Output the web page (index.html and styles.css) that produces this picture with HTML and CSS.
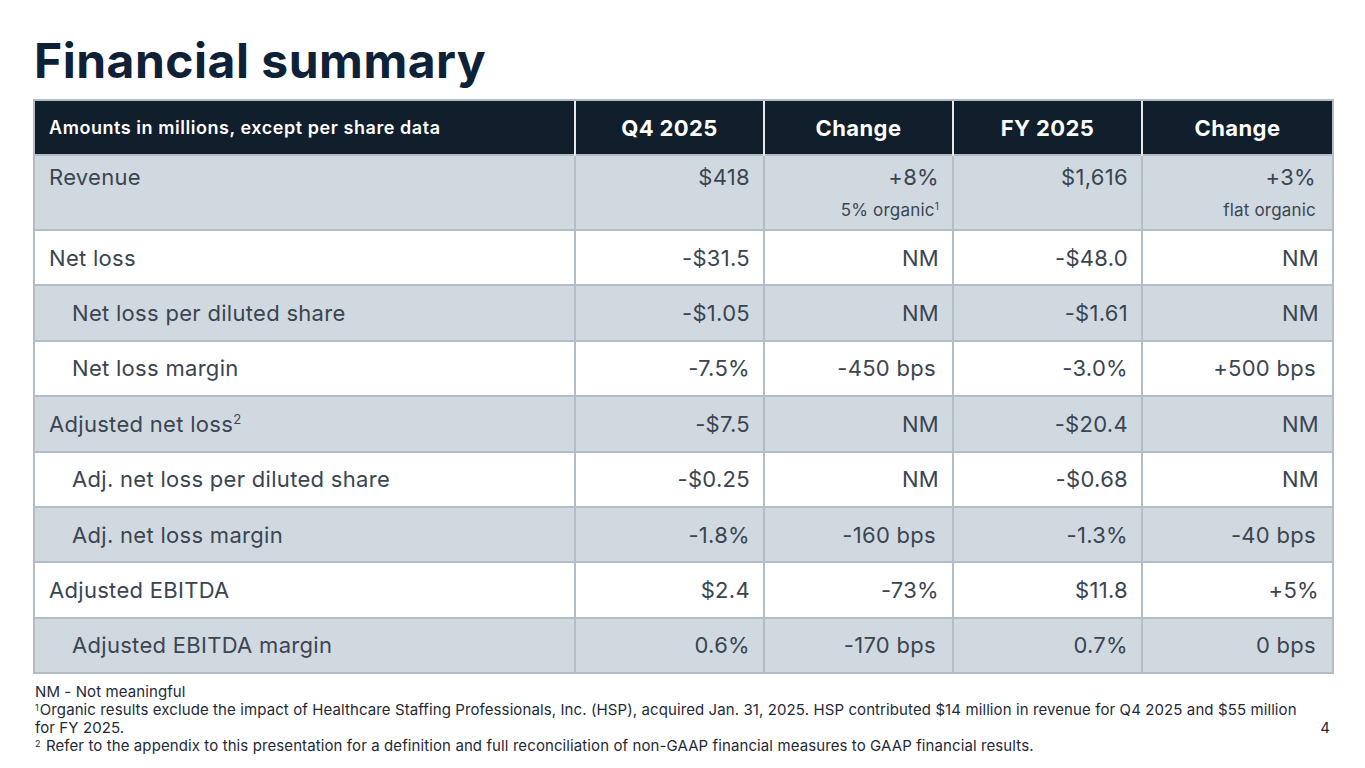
FILE: index.html
```html
<!DOCTYPE html>
<html>
<head>
<meta charset="utf-8">
<link rel="stylesheet" href="styles.css">
</head>
<body>
<div class="slide">
  <h1 class="title">Financial summary</h1>
  <table class="fin">
    <colgroup>
      <col class="c-label"><col class="c-num"><col class="c-num"><col class="c-num"><col class="c-last">
    </colgroup>
    <thead>
      <tr>
        <th class="h-label">Amounts in millions, except per share data</th>
        <th>Q4 2025</th>
        <th>Change</th>
        <th>FY 2025</th>
        <th>Change</th>
      </tr>
    </thead>
    <tbody>
      <tr class="shade rev">
        <td class="label">Revenue</td>
        <td>$418</td>
        <td>+8%<span class="sub">5% organic<sup>1</sup></span></td>
        <td>$1,616</td>
        <td class="bps">+3%<span class="sub">flat organic</span></td>
      </tr>
      <tr>
        <td class="label">Net loss</td>
        <td>-$31.5</td><td>NM</td><td>-$48.0</td><td>NM</td>
      </tr>
      <tr class="shade">
        <td class="label ind">Net loss per diluted share</td>
        <td>-$1.05</td><td>NM</td><td>-$1.61</td><td>NM</td>
      </tr>
      <tr>
        <td class="label ind">Net loss margin</td>
        <td>-7.5%</td><td class="bps">-450 bps</td><td>-3.0%</td><td class="bps">+500 bps</td>
      </tr>
      <tr class="shade">
        <td class="label">Adjusted net loss<sup>2</sup></td>
        <td>-$7.5</td><td>NM</td><td>-$20.4</td><td>NM</td>
      </tr>
      <tr>
        <td class="label ind">Adj. net loss per diluted share</td>
        <td>-$0.25</td><td>NM</td><td>-$0.68</td><td>NM</td>
      </tr>
      <tr class="shade">
        <td class="label ind">Adj. net loss margin</td>
        <td>-1.8%</td><td class="bps">-160 bps</td><td>-1.3%</td><td class="bps">-40 bps</td>
      </tr>
      <tr>
        <td class="label">Adjusted EBITDA</td>
        <td>$2.4</td><td>-73%</td><td>$11.8</td><td>+5%</td>
      </tr>
      <tr class="shade">
        <td class="label ind">Adjusted EBITDA margin</td>
        <td>0.6%</td><td class="bps">-170 bps</td><td>0.7%</td><td class="bps">0 bps</td>
      </tr>
    </tbody>
  </table>
  <div class="foot">
    <div class="notes">
      <p>NM - Not meaningful</p>
      <p><sup>1</sup>Organic results exclude the impact of Healthcare Staffing Professionals, Inc. (HSP), acquired Jan. 31, 2025. HSP contributed $14 million in revenue for Q4 2025 and $55 million for FY 2025.</p>
      <p><sup>2</sup> Refer to the appendix to this presentation for a definition and full reconciliation of non-GAAP financial measures to GAAP financial results.</p>
    </div>
    <div class="page">4</div>
  </div>
</div>
</body>
</html>
```
FILE: styles.css
```css
html, body {
  margin: 0;
  padding: 0;
  background: #ffffff;
}
.slide {
  width: 1365px;
  height: 768px;
  box-sizing: border-box;
  padding: 31px 33px 0 33px;
  font-family: Inter, "Liberation Sans", sans-serif;
  color: #3a4551;
}
.title {
  margin: 0 0 0 1px;
  font-size: 48px;
  line-height: 60px;
  font-weight: 700;
  letter-spacing: 0.5px;
  color: #0f2137;
  height: 68px;
}
.fin {
  width: 1299px;
  border-collapse: collapse;
  table-layout: fixed;
  border: 2px solid #b3bdc7;
}
.c-label { width: 541px; }
.c-num { width: 189px; }
.c-last { width: 191px; }
.fin th {
  background: #111e2b;
  color: #ffffff;
  font-weight: 700;
  font-size: 22px;
  letter-spacing: 0.4px;
  height: 55px;
  box-sizing: border-box;
  padding: 0;
  text-align: center;
  border-left: 2px solid #e6eaee;
  border-top: 2px solid #b3bdc7;
}
.fin th.h-label {
  text-align: left;
  font-size: 18px;
  font-weight: 600;
  letter-spacing: 0.55px;
  padding-left: 14px;
  border-left: 2px solid #b3bdc7;
}
.fin td {
  height: 55.4px;
  box-sizing: border-box;
  padding: 0 13px 0 14px;
  font-size: 22px;
  letter-spacing: 0.3px;
  text-align: right;
  vertical-align: middle;
  border: 2px solid #b3bdc7;
  background: #ffffff;
}
.fin tr.shade td {
  background: #d1d9e0;
}
.fin td.label {
  text-align: left;
}
.fin td.ind {
  padding-left: 37px;
}
.fin td.bps {
  padding-right: 16px;
}
.fin tr.rev td {
  height: 75px;
  vertical-align: top;
  padding-top: 8px;
  line-height: 26px;
}
.sub {
  display: block;
  font-size: 17px;
  letter-spacing: 0.2px;
  line-height: 22px;
  margin-top: 9px;
}
.fin sup {
  font-size: 0.6em;
  vertical-align: baseline;
  position: relative;
  top: -0.6em;
  line-height: 0;
}
.foot {
  display: flex;
  align-items: flex-end;
  justify-content: space-between;
  margin-top: 9px;
  color: #1f2a36;
}
.notes {
  width: 1265px;
  font-size: 15px;
  letter-spacing: 0.1px;
  line-height: 18px;
  padding-left: 2px;
}
.notes p {
  margin: 0;
}
.notes sup {
  font-size: 0.6em;
  vertical-align: baseline;
  position: relative;
  top: -0.45em;
  line-height: 0;
  margin-right: 1px;
}
.page {
  font-size: 15px;
  line-height: 18px;
  margin-bottom: 18px;
  margin-right: 2px;
}
```
